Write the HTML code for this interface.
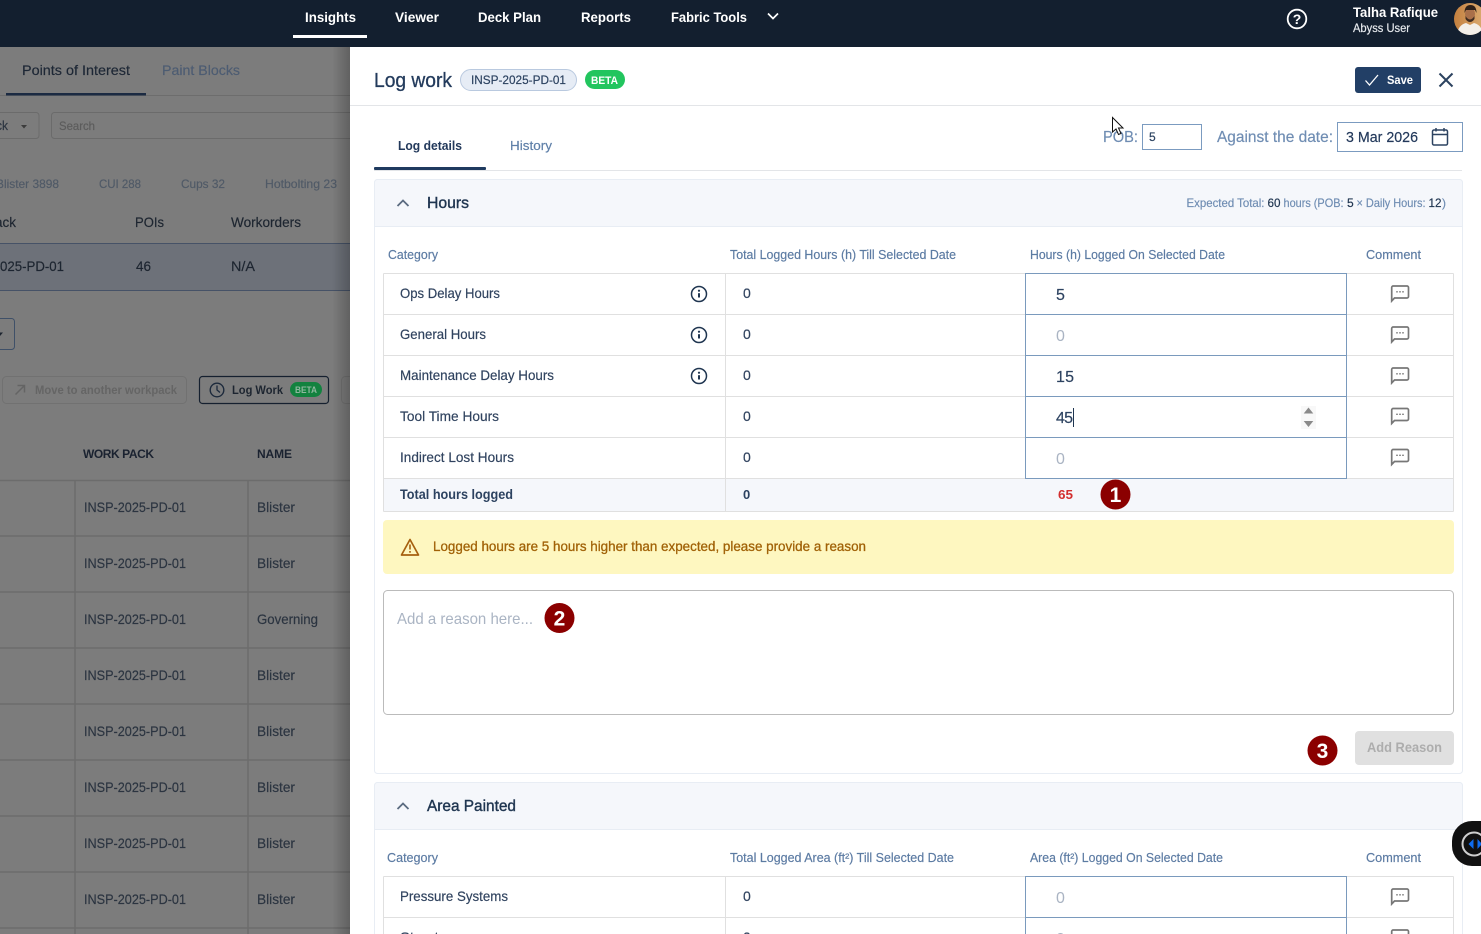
<!DOCTYPE html>
<html lang="en"><head><meta charset="utf-8"><title>Log work</title>
<style>
html,body{margin:0;padding:0;width:1481px;height:934px;overflow:hidden;background:#fff}
svg{display:block}
text{font-family:"Liberation Sans",Arial,sans-serif;white-space:pre;fill:currentColor;stroke:currentColor;stroke-width:.18px}
.n{font-size:14px;font-weight:700;color:#fff;stroke-width:0}
.l{font-size:14px;color:#2b3440}
.h{font-size:13px;color:#5c7ba3}
.r{font-size:14px;color:#30435f}
.i{font-size:16px;color:#2c4260}
.p{font-size:16px;color:#aab4c3;stroke-width:0}
.b{font-size:21px;font-weight:700;color:#fff;text-anchor:middle;stroke-width:0}
.x{font-size:12px;color:#6f8db3}
.d{font-size:12px;color:#1f3550}
.s{font-size:12px;font-weight:700;stroke-width:0}
.ln{stroke:#e0e0e0;stroke-width:1;fill:none}
.ib{stroke:#7a9abd;stroke-width:1;fill:#fff}
.c{fill:#fff;stroke:#777;stroke-width:1.7}
.inf{fill:none;stroke:#1f3550;stroke-width:1.5}
</style></head><body>
<svg width="1481" height="934" viewBox="0 0 1481 934" xmlns="http://www.w3.org/2000/svg" shape-rendering="geometricPrecision">
<defs>
<linearGradient id="sh" x1="0" x2="1" y1="0" y2="0"><stop offset="0" stop-color="#000" stop-opacity="0"/><stop offset="1" stop-color="#000" stop-opacity=".22"/></linearGradient>
<linearGradient id="avbg" x1="0" x2="1" y1="0" y2="0"><stop offset="0" stop-color="#c4803f"/><stop offset="1" stop-color="#dcae74"/></linearGradient>
<g id="cm"><path class="c" d="M-6.800-7.500H7a1.500 1.500 0 0 1 1.500 1.500v9A1.500 1.500 0 0 1 7 4.500H-5.500L-8.300 7.500V-6a1.500 1.500 0 0 1 1.500-1.500z"/><path d="M-3.700-1.700h1.400M-.7-1.700h1.400M2.300-1.700h1.400" stroke="#666" stroke-width="1.400"/></g>
<g id="inf"><circle class="inf" r="7.500"/><path d="M0-.8v4.300" stroke="#1f3550" stroke-width="2"/><circle cy="-3.300" r="1.100" fill="#1f3550"/></g>
<path id="chev" d="M-5.500 3 0-2.500 5.500 3" fill="none" stroke="#5b6b80" stroke-width="1.800"/>
</defs>

<!-- Background page (dimmed) -->
<rect width="350" height="934" fill="#7c7c7c"/>
<rect y="95" width="350" height="1" fill="#6d6d6d"/>
<rect x="6" y="93" width="140" height="2.500" fill="#1b2a42"/>
<text x="22" y="75" class="l" textLength="108" lengthAdjust="spacingAndGlyphs" style="color:#1d2735">Points of Interest</text>
<text x="162" y="75" class="l" textLength="78" lengthAdjust="spacingAndGlyphs" style="color:#4d5c72">Paint Blocks</text>
<rect x="-8" y="112.500" width="47" height="26" rx="3" fill="none" stroke="#6b6b6b"/>
<text x="-4" y="130" textLength="12" lengthAdjust="spacingAndGlyphs" style="font-size:13px;color:#2b3440">ck</text>
<path d="M21 125h6l-3 3.500z" fill="#3c3c3c"/>
<rect x="51.500" y="112.500" width="310" height="26" rx="3" fill="none" stroke="#6b6b6b"/>
<text x="59" y="130" textLength="36" lengthAdjust="spacingAndGlyphs" style="font-size:12px;color:#5c5c5c">Search</text>
<text x="-4" y="188" textLength="63" lengthAdjust="spacingAndGlyphs" style="font-size:12px;color:#505a67">Blister 3898</text>
<text x="99" y="188" textLength="42" lengthAdjust="spacingAndGlyphs" style="font-size:12px;color:#505a67">CUI 288</text>
<text x="181" y="188" textLength="44" lengthAdjust="spacingAndGlyphs" style="font-size:12px;color:#505a67">Cups 32</text>
<text x="265" y="188" textLength="72" lengthAdjust="spacingAndGlyphs" style="font-size:12px;color:#505a67">Hotbolting 23</text>
<text x="-5" y="227" textLength="21" lengthAdjust="spacingAndGlyphs" style="font-size:14px;color:#1d2530">ack</text>
<text x="135" y="227" textLength="29" lengthAdjust="spacingAndGlyphs" style="font-size:14px;color:#1d2530">POIs</text>
<text x="231" y="227" textLength="70" lengthAdjust="spacingAndGlyphs" style="font-size:14px;color:#1d2530">Workorders</text>
<rect x="-3" y="243.500" width="356" height="47" fill="#6d7179" stroke="#465267"/>
<text x="0" y="271" textLength="64" lengthAdjust="spacingAndGlyphs" style="font-size:14px;color:#1d2530">025-PD-01</text>
<text x="136" y="271" textLength="15" lengthAdjust="spacingAndGlyphs" style="font-size:14px;color:#1d2530">46</text>
<text x="231" y="271" textLength="24" lengthAdjust="spacingAndGlyphs" style="font-size:14px;color:#1d2530">N/A</text>
<rect x="-10" y="318.500" width="24.500" height="31" rx="3" fill="none" stroke="#3f5068"/>
<path d="M-3 332.500h6l-3 3.500z" fill="#1d2530"/>
<rect x="2.500" y="376.500" width="184" height="27" rx="4" fill="none" stroke="#717171"/>
<path d="M15.500 394.500 24.500 385.500M17.500 385.500h7v7" fill="none" stroke="#646464" stroke-width="1.500"/>
<text x="35" y="394" class="s" textLength="142" lengthAdjust="spacingAndGlyphs" style="color:#656565">Move to another workpack</text>
<rect x="199.500" y="376.500" width="129" height="27" rx="3" fill="none" stroke="#15202f" stroke-width="1.200"/>
<circle cx="217" cy="390" r="6.800" fill="none" stroke="#1d2a3c" stroke-width="1.400"/>
<path d="M217 385.500V390l3 2.500" fill="none" stroke="#1d2a3c" stroke-width="1.300"/>
<text x="232" y="394" class="s" textLength="51" lengthAdjust="spacingAndGlyphs" style="color:#1d2530">Log Work</text>
<rect x="290" y="382" width="32" height="15" rx="7.500" fill="#12823f"/>
<text x="295" y="393" textLength="22" lengthAdjust="spacingAndGlyphs" style="font-size:9px;font-weight:700;color:#8fb89f;stroke-width:0">BETA</text>
<rect x="341.500" y="376.500" width="20" height="27" rx="4" fill="none" stroke="#717171"/>
<text x="83" y="458" class="s" textLength="71" lengthAdjust="spacing" style="color:#1a2230">WORK PACK</text>
<text x="257" y="458" class="s" textLength="35" lengthAdjust="spacing" style="color:#1a2230">NAME</text>
<path d="M0 480.500H350M0 536H350M0 592H350M0 648H350M0 704H350M0 760H350M0 816H350M0 872H350M0 928H350" stroke="#6c6c6c" stroke-width="1.500"/>
<path d="M75 480V934M248 480V934" stroke="#6c6c6c" stroke-width="1.500"/>
<text x="84" y="512" class="l" textLength="102" lengthAdjust="spacingAndGlyphs">INSP-2025-PD-01</text>
<text x="84" y="568" class="l" textLength="102" lengthAdjust="spacingAndGlyphs">INSP-2025-PD-01</text>
<text x="84" y="624" class="l" textLength="102" lengthAdjust="spacingAndGlyphs">INSP-2025-PD-01</text>
<text x="84" y="680" class="l" textLength="102" lengthAdjust="spacingAndGlyphs">INSP-2025-PD-01</text>
<text x="84" y="736" class="l" textLength="102" lengthAdjust="spacingAndGlyphs">INSP-2025-PD-01</text>
<text x="84" y="792" class="l" textLength="102" lengthAdjust="spacingAndGlyphs">INSP-2025-PD-01</text>
<text x="84" y="848" class="l" textLength="102" lengthAdjust="spacingAndGlyphs">INSP-2025-PD-01</text>
<text x="84" y="904" class="l" textLength="102" lengthAdjust="spacingAndGlyphs">INSP-2025-PD-01</text>
<text x="257" y="512" class="l" textLength="38" lengthAdjust="spacingAndGlyphs">Blister</text>
<text x="257" y="568" class="l" textLength="38" lengthAdjust="spacingAndGlyphs">Blister</text>
<text x="257" y="624" class="l" textLength="61" lengthAdjust="spacingAndGlyphs">Governing</text>
<text x="257" y="680" class="l" textLength="38" lengthAdjust="spacingAndGlyphs">Blister</text>
<text x="257" y="736" class="l" textLength="38" lengthAdjust="spacingAndGlyphs">Blister</text>
<text x="257" y="792" class="l" textLength="38" lengthAdjust="spacingAndGlyphs">Blister</text>
<text x="257" y="848" class="l" textLength="38" lengthAdjust="spacingAndGlyphs">Blister</text>
<text x="257" y="904" class="l" textLength="38" lengthAdjust="spacingAndGlyphs">Blister</text>
<rect x="332" y="47" width="18" height="887" fill="url(#sh)"/>

<!-- Panel -->
<rect x="350" y="47" width="1131" height="887" fill="#fff"/>
<rect x="350" y="105" width="1131" height="1" fill="#e3e5e8"/>
<text x="374" y="87" textLength="78" lengthAdjust="spacingAndGlyphs" style="font-size:20px;color:#233b5c;stroke-width:.3">Log work</text>
<rect x="460.500" y="69.500" width="116" height="21" rx="10.500" fill="#e6ecf5" stroke="#b9c9df"/>
<text x="471" y="84" textLength="95" lengthAdjust="spacingAndGlyphs" style="font-size:12px;color:#2c4260">INSP-2025-PD-01</text>
<rect x="585" y="70" width="40" height="19" rx="9.500" fill="#22c55e"/>
<text x="591" y="84" textLength="27" lengthAdjust="spacingAndGlyphs" style="font-size:11px;font-weight:700;color:#fff;stroke-width:0">BETA</text>
<rect x="1355" y="67" width="66" height="26" rx="3" fill="#223f66"/>
<path d="M1365.500 80.500l4 4.500 8.500-10" fill="none" stroke="#fff" stroke-width="1.300"/>
<text x="1387" y="84" class="s" textLength="26" lengthAdjust="spacingAndGlyphs" style="color:#fff">Save</text>
<path d="M1439.500 73.500 1452.500 86.500M1452.500 73.500 1439.500 86.500" stroke="#2c4260" stroke-width="2"/>

<rect x="374" y="170" width="1088" height="1" fill="#e3e5e8"/>
<rect x="374" y="167" width="112" height="3" rx="1" fill="#1f3a5f"/>
<text x="398" y="150" textLength="64" lengthAdjust="spacingAndGlyphs" style="font-size:13px;font-weight:700;color:#23395b;stroke-width:0">Log details</text>
<text x="510" y="150" textLength="42" lengthAdjust="spacingAndGlyphs" style="font-size:13px;color:#5e7fa8">History</text>

<text x="1103" y="142" textLength="35" lengthAdjust="spacingAndGlyphs" style="font-size:16px;color:#6f8db3">POB:</text>
<rect x="1142.500" y="124.500" width="59" height="25" fill="#fff" stroke="#7b9bc0"/>
<text x="1149" y="141" style="font-size:12px;color:#2c4260">5</text>
<text x="1217" y="142" textLength="116" lengthAdjust="spacingAndGlyphs" style="font-size:16px;color:#6f8db3">Against the date:</text>
<rect x="1337.500" y="122.500" width="125" height="29" fill="#fff" stroke="#7b9bc0"/>
<text x="1346" y="142" textLength="72" lengthAdjust="spacingAndGlyphs" style="font-size:15px;color:#23395b">3 Mar 2026</text>
<g fill="none" stroke="#2c4260" stroke-width="1.500"><rect x="1432.500" y="130" width="15" height="15" rx="1.500"/><path d="M1432.500 134.500h15M1436 128v3.500M1444 128v3.500"/></g>
<path d="M1112.500 117.500v14.500l3.500-3 2.500 5.500 2.500-1-2.500-5.500h4.500z" fill="#fff" stroke="#111" stroke-width="1"/>

<!-- Hours card -->
<rect x="374.500" y="179.500" width="1088" height="594" rx="3" fill="#fff" stroke="#e8edf4"/>
<path d="M374.500 226.500V182.500a3 3 0 0 1 3-3h1082a3 3 0 0 1 3 3v44z" fill="#f5f7fb" stroke="#e8edf4"/>
<use href="#chev" x="403" y="203"/>
<text x="427" y="208" textLength="42" lengthAdjust="spacingAndGlyphs" style="font-size:16px;color:#1f3550;stroke-width:.4">Hours</text>
<text x="1186.500" y="207" class="x" textLength="78" lengthAdjust="spacingAndGlyphs">Expected Total:</text>
<text x="1267.500" y="207" class="d" textLength="13" lengthAdjust="spacingAndGlyphs">60</text>
<text x="1283.500" y="207" class="x" textLength="60" lengthAdjust="spacingAndGlyphs">hours (POB:</text>
<text x="1347" y="207" class="d">5</text>
<text x="1356.500" y="207" class="x" textLength="69" lengthAdjust="spacingAndGlyphs">× Daily Hours:</text>
<text x="1428.500" y="207" class="d" textLength="13" lengthAdjust="spacingAndGlyphs">12</text>
<text x="1442" y="207" class="x">)</text>

<text x="388" y="259" class="h" textLength="50" lengthAdjust="spacingAndGlyphs">Category</text>
<text x="730" y="259" class="h" textLength="226" lengthAdjust="spacingAndGlyphs">Total Logged Hours (h) Till Selected Date</text>
<text x="1030" y="259" class="h" textLength="195" lengthAdjust="spacingAndGlyphs">Hours (h) Logged On Selected Date</text>
<text x="1366" y="259" class="h" textLength="55" lengthAdjust="spacingAndGlyphs">Comment</text>

<rect x="383.500" y="478.500" width="1070" height="33" fill="#f5f7fb"/>
<path class="ln" d="M383.500 273.500H1453.500M383.500 314.500H1453.500M383.500 355.500H1453.500M383.500 396.500H1453.500M383.500 437.500H1453.500M383.500 478.500H1453.500M383.500 511.500H1453.500M383.500 273.500V511.500M725.500 273.500V511.500M1453.500 273.500V511.500"/>
<path d="M1025.500 273.500H1346.500V478.500H1025.500ZM1025.500 314.500H1346.500M1025.500 355.500H1346.500M1025.500 396.500H1346.500M1025.500 437.500H1346.500" class="ib"/>

<text x="400" y="298" class="r" textLength="100" lengthAdjust="spacingAndGlyphs">Ops Delay Hours</text>
<text x="400" y="339" class="r" textLength="86" lengthAdjust="spacingAndGlyphs">General Hours</text>
<text x="400" y="380" class="r" textLength="154" lengthAdjust="spacingAndGlyphs">Maintenance Delay Hours</text>
<text x="400" y="421" class="r" textLength="99" lengthAdjust="spacingAndGlyphs">Tool Time Hours</text>
<text x="400" y="462" class="r" textLength="114" lengthAdjust="spacingAndGlyphs">Indirect Lost Hours</text>
<use href="#inf" x="699" y="294"/><use href="#inf" x="699" y="335"/><use href="#inf" x="699" y="376"/>
<text x="743" y="298" class="r">0</text><text x="743" y="339" class="r">0</text><text x="743" y="380" class="r">0</text><text x="743" y="421" class="r">0</text><text x="743" y="462" class="r">0</text>
<text x="1056" y="300" class="i">5</text>
<text x="1056" y="341" class="p">0</text>
<text x="1056" y="382" class="i" textLength="18">15</text>
<text x="1056" y="423" class="i" textLength="17">45</text>
<rect x="1073" y="408" width="1" height="19" fill="#1f3550"/>
<text x="1056" y="464" class="p">0</text>
<rect x="1301" y="406" width="15" height="23" fill="#f8f8f8"/>
<path d="M1308.500 407.500l4.800 6h-9.600zM1308.500 427l4.800-6h-9.600z" fill="#8a8a8a"/>
<use href="#cm" x="1400" y="293.500"/><use href="#cm" x="1400" y="334.500"/><use href="#cm" x="1400" y="375.500"/><use href="#cm" x="1400" y="416"/><use href="#cm" x="1400" y="457"/>
<text x="400" y="499" textLength="113" lengthAdjust="spacingAndGlyphs" style="font-size:14px;font-weight:700;color:#2c4260;stroke-width:0">Total hours logged</text>
<text x="743" y="499" style="font-size:13px;font-weight:700;color:#2c4260;stroke-width:0">0</text>
<text x="1058" y="499" textLength="15" lengthAdjust="spacingAndGlyphs" style="font-size:13px;font-weight:700;color:#d32f2f;stroke-width:0">65</text>
<circle cx="1115.500" cy="494.500" r="15" fill="#8b0000"/><text x="1115.500" y="502" class="b">1</text>

<rect x="383" y="520" width="1071" height="54" rx="4" fill="#fef7c0"/>
<path d="M410 539.500 401.500 555h17z" fill="none" stroke="#a6600f" stroke-width="1.700" stroke-linejoin="round"/>
<path d="M410 544.500v5M410 551v1.800" stroke="#a6600f" stroke-width="1.600"/>
<text x="433" y="551" textLength="433" lengthAdjust="spacingAndGlyphs" style="font-size:14px;color:#a16207;stroke-width:.3">Logged hours are 5 hours higher than expected, please provide a reason</text>

<rect x="383.500" y="590.500" width="1070" height="124" rx="4" fill="#fff" stroke="#bbb"/>
<text x="397" y="624" class="p" textLength="136" lengthAdjust="spacingAndGlyphs">Add a reason here...</text>
<circle cx="559.500" cy="618" r="15" fill="#8b0000"/><text x="559.500" y="625.500" class="b">2</text>
<rect x="1355" y="731" width="99" height="34" rx="4" fill="#e0e0e0"/>
<text x="1367" y="752" textLength="75" lengthAdjust="spacingAndGlyphs" style="font-size:14px;font-weight:700;color:#adadad;stroke-width:0">Add Reason</text>
<circle cx="1322.500" cy="750.500" r="15" fill="#8b0000"/><text x="1322.500" y="758" class="b">3</text>

<!-- Area Painted card -->
<rect x="374.500" y="782.500" width="1088" height="170" rx="3" fill="#fff" stroke="#e8edf4"/>
<path d="M374.500 829.500V785.500a3 3 0 0 1 3-3h1082a3 3 0 0 1 3 3v44z" fill="#f5f7fb" stroke="#e8edf4"/>
<use href="#chev" x="403" y="806"/>
<text x="427" y="811" textLength="89" lengthAdjust="spacingAndGlyphs" style="font-size:16px;color:#1f3550;stroke-width:.4">Area Painted</text>
<text x="387" y="862" class="h" textLength="51" lengthAdjust="spacingAndGlyphs">Category</text>
<text x="730" y="862" class="h" textLength="224" lengthAdjust="spacingAndGlyphs">Total Logged Area (ft²) Till Selected Date</text>
<text x="1030" y="862" class="h" textLength="193" lengthAdjust="spacingAndGlyphs">Area (ft²) Logged On Selected Date</text>
<text x="1366" y="862" class="h" textLength="55" lengthAdjust="spacingAndGlyphs">Comment</text>
<path class="ln" d="M383.500 876.500H1453.500M383.500 917.500H1453.500M383.500 876.500V934M725.500 876.500V934M1453.500 876.500V934"/>
<path d="M1025.500 934V876.500H1346.500V934M1025.500 917.500H1346.500" fill="#fff" stroke="#7a9abd"/>
<text x="400" y="901" class="r" textLength="108" lengthAdjust="spacingAndGlyphs">Pressure Systems</text>
<text x="743" y="901" class="r">0</text>
<text x="1056" y="903" class="p">0</text>
<use href="#cm" x="1400" y="896.500"/>
<text x="400" y="942" class="r" textLength="60" lengthAdjust="spacingAndGlyphs">Structure</text>
<text x="743" y="942" class="r">0</text>
<text x="1056" y="944" class="p">0</text>
<use href="#cm" x="1400" y="937.500"/>

<!-- Floating widget -->
<rect x="1452" y="821" width="70" height="45" rx="20" fill="#111"/>
<circle cx="1474" cy="844" r="11.500" fill="#111" stroke="#cfcfcf" stroke-width="2"/>
<path d="M1473.500 839l-5 5 5 5zM1477.500 839l4.500 5-4.500 5z" fill="#0f6cf0"/>

<!-- Nav -->
<rect width="1481" height="47" fill="#131f2f"/>
<text x="305" y="22" class="n" textLength="51" lengthAdjust="spacingAndGlyphs">Insights</text>
<rect x="293" y="35" width="74" height="3" fill="#fff"/>
<text x="395" y="22" class="n" textLength="44" lengthAdjust="spacingAndGlyphs">Viewer</text>
<text x="478" y="22" class="n" textLength="63" lengthAdjust="spacingAndGlyphs">Deck Plan</text>
<text x="581" y="22" class="n" textLength="50" lengthAdjust="spacingAndGlyphs">Reports</text>
<text x="671" y="22" class="n" textLength="76" lengthAdjust="spacingAndGlyphs">Fabric Tools</text>
<path d="M768 13.500l5 5 5-5" fill="none" stroke="#fff" stroke-width="1.700"/>
<circle cx="1297" cy="19" r="9.300" fill="none" stroke="#fff" stroke-width="1.800"/>
<text x="1297" y="24" text-anchor="middle" style="font-size:14px;font-weight:700;color:#fff;stroke-width:0">?</text>
<text x="1353" y="17" textLength="85" lengthAdjust="spacingAndGlyphs" class="n">Talha Rafique</text>
<text x="1353" y="32" textLength="57" lengthAdjust="spacingAndGlyphs" style="font-size:12px;color:#e8ebef">Abyss User</text>
<clipPath id="av"><circle cx="1470" cy="19" r="16"/></clipPath>
<g clip-path="url(#av)">
<rect x="1454" y="3" width="32" height="32" fill="url(#avbg)"/>
<ellipse cx="1470" cy="14" rx="5" ry="6.500" fill="#a9704a"/>
<path d="M1464.500 13q0-8 6-8t6 8l-1.500-3h-9z" fill="#2e2018"/>
<path d="M1465.500 16q4.500 7 9 0v3q-2 3-4.500 3t-4.500-3z" fill="#3f2c20"/>
<path d="M1457 35q1-10 9-12l4 2 4-2q8 2 9 12z" fill="#f3efe9"/>
</g>
</svg>
</body></html>
